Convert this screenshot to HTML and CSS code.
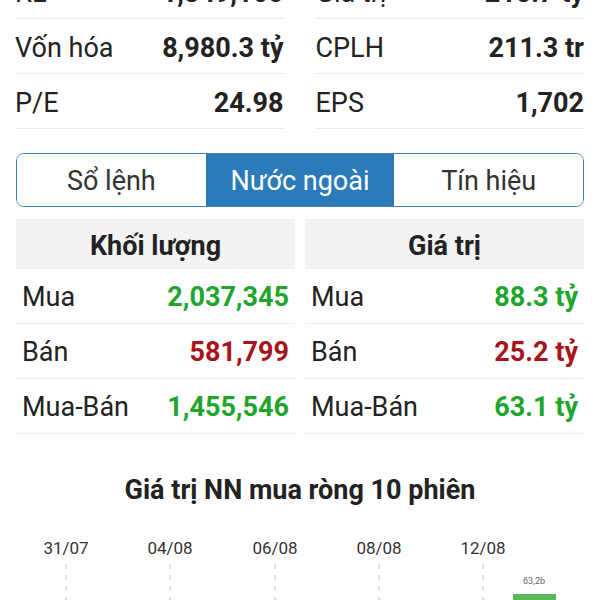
FILE: index.html
```html
<!DOCTYPE html>
<html lang="vi">

<head>
    <meta charset="UTF-8">
    <meta name="viewport" content="width=device-width, initial-scale=1.0">
    <title>Nước ngoài</title>
    <link rel="stylesheet" href="styles.css">
</head>

<body>
    <div class="page">
        <div class="stats">
            <div class="stats-col">
                <div class="stat-row"><span>KL</span><b>1,349,160</b></div>
                <div class="stat-row"><span>Vốn hóa</span><b>8,980.3 tỷ</b></div>
                <div class="stat-row"><span>P/E</span><b>24.98</b></div>
            </div>
            <div class="stats-col">
                <div class="stat-row"><span>Giá trị</span><b>215.7 tỷ</b></div>
                <div class="stat-row"><span>CPLH</span><b>211.3 tr</b></div>
                <div class="stat-row"><span>EPS</span><b>1,702</b></div>
            </div>
        </div>

        <div class="tabs">
            <div class="tab">Sổ lệnh</div>
            <div class="tab active">Nước ngoài</div>
            <div class="tab">Tín hiệu</div>
        </div>

        <div class="foreign">
            <div class="foreign-col">
                <div class="foreign-head">Khối lượng</div>
                <div class="foreign-row"><span>Mua</span><b class="up">2,037,345</b></div>
                <div class="foreign-row"><span>Bán</span><b class="down">581,799</b></div>
                <div class="foreign-row"><span>Mua-Bán</span><b class="up">1,455,546</b></div>
            </div>
            <div class="foreign-col">
                <div class="foreign-head">Giá trị</div>
                <div class="foreign-row"><span>Mua</span><b class="up">88.3 tỷ</b></div>
                <div class="foreign-row"><span>Bán</span><b class="down">25.2 tỷ</b></div>
                <div class="foreign-row"><span>Mua-Bán</span><b class="up">63.1 tỷ</b></div>
            </div>
        </div>

        <div class="chart-title">Giá trị NN mua ròng 10 phiên</div>

        <svg class="chart" width="600" height="80" viewBox="0 0 600 80">
            <g class="dates" text-anchor="middle">
                <text x="66" y="24">31/07</text>
                <text x="170" y="24">04/08</text>
                <text x="275" y="24">06/08</text>
                <text x="379" y="24">08/08</text>
                <text x="483" y="24">12/08</text>
            </g>
            <g class="grid">
                <line x1="66" y1="34" x2="66" y2="80"></line>
                <line x1="170" y1="34" x2="170" y2="80"></line>
                <line x1="275" y1="34" x2="275" y2="80"></line>
                <line x1="379" y1="34" x2="379" y2="80"></line>
                <line x1="483" y1="34" x2="483" y2="80"></line>
            </g>
            <text class="bar-label" x="534" y="54" text-anchor="middle">63,2b</text>
            <rect class="bar" x="513" y="64" width="43" height="16"></rect>
        </svg>
    </div>
</body>

</html>
```

FILE: styles.css
```css
* {
    padding: 0;
    margin: 0;
    box-sizing: border-box;
}

body {
    background: #fff;
    font-family: Roboto, "Noto Sans", "Liberation Sans", sans-serif;
    color: #222;
    overflow: hidden;
}

.page {
    width: 600px;
    margin-top: -36px;
}

.stats {
    display: grid;
    grid-template-columns: 1fr 1fr;
    gap: 32px;
    padding: 0 16px 0 15px;
}

.stat-row {
    display: flex;
    justify-content: space-between;
    align-items: center;
    height: 55px;
    padding-top: 4px;
    border-bottom: 1px solid #ececec;
    font-size: 27px;
}

.stat-row b {
    font-weight: 700;
    color: #222;
}

.tabs {
    display: flex;
    margin: 24px 16px 0 16px;
    height: 54px;
    border: 1.5px solid #3a83b8;
    border-radius: 8px;
    overflow: hidden;
}

.tab {
    flex: 1;
    display: flex;
    align-items: center;
    justify-content: center;
    padding-top: 2px;
    font-size: 27px;
    color: #333;
    background: #fff;
}

.tab.active {
    background: #2a7bb8;
    color: #fff;
}

.foreign {
    display: grid;
    grid-template-columns: 1fr 1fr;
    gap: 10px;
    padding: 12px 16px 0 16px;
}

.foreign-head {
    height: 50px;
    padding-top: 4px;
    background: #f3f3f3;
    display: flex;
    align-items: center;
    justify-content: center;
    font-size: 27px;
    font-weight: 700;
}

.foreign-row {
    display: flex;
    justify-content: space-between;
    align-items: center;
    height: 55px;
    padding: 2px 6px 0 6px;
    border-bottom: 1px solid #ececec;
    font-size: 27px;
}

.up {
    color: #1fa52b;
}

.down {
    color: #a8141c;
}

.chart-title {
    text-align: center;
    font-size: 27px;
    font-weight: 700;
    margin-top: 40px;
    height: 42px;
}

.chart {
    display: block;
    margin-top: 14px;
}

.dates text {
    font-size: 17px;
    fill: #333;
}

.grid line {
    stroke: #c4c4c4;
    stroke-width: 1;
    stroke-dasharray: 5 6;
}

.bar-label {
    font-size: 9px;
    fill: #666;
}

.bar {
    fill: #5cb85c;
}
```
